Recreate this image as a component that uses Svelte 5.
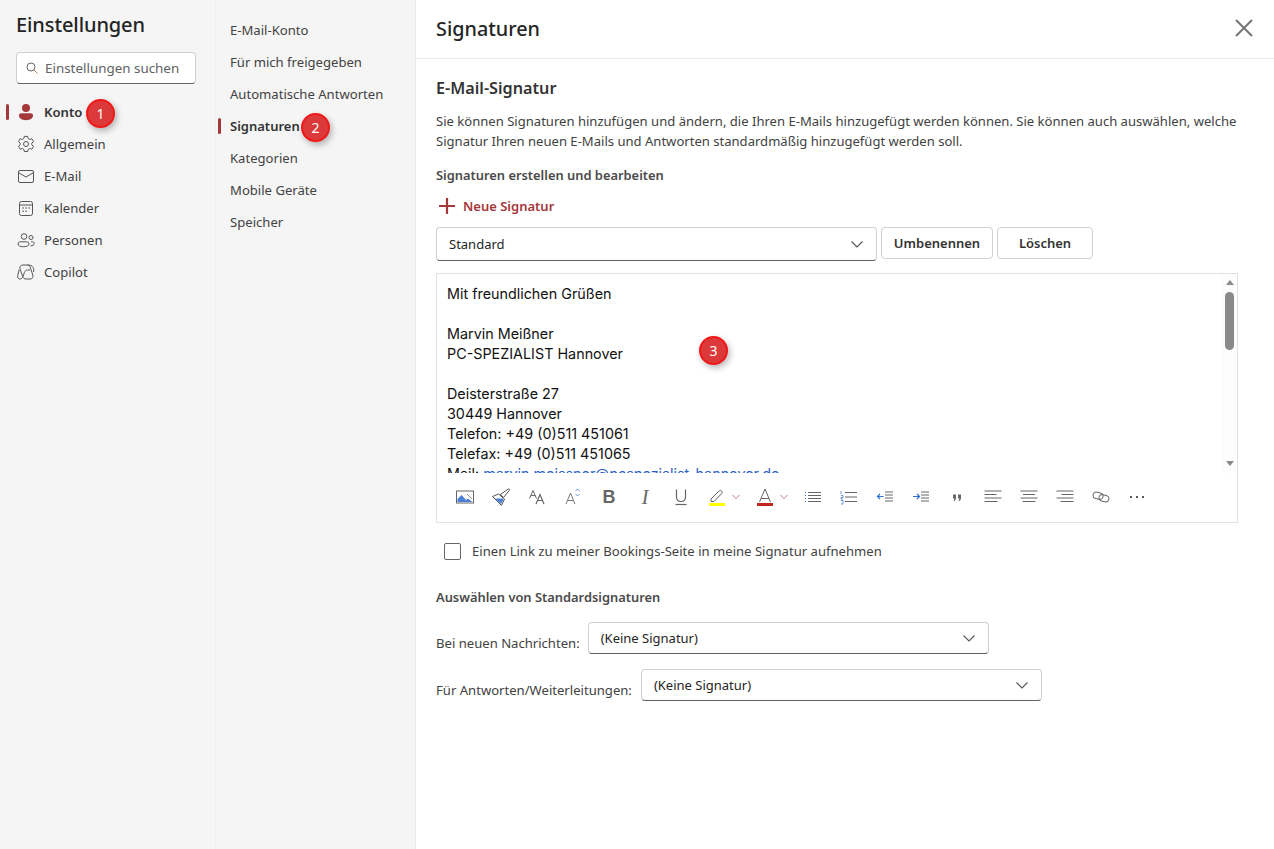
<script>
  const nav = ['Allgemein','E-Mail','Kalender','Personen','Copilot'];
  const sub = ['E-Mail-Konto','Für mich freigegeben','Automatische Antworten','Signaturen','Kategorien','Mobile Geräte','Speicher'];
  const lines = ['Mit freundlichen Grüßen','','Marvin Meißner','PC-SPEZIALIST Hannover','','Deisterstraße 27','30449 Hannover','Telefon: +49 (0)511 451061','Telefax: +49 (0)511 451065'];
</script>

{#snippet chevron()}
  <svg class="chev" width="14" height="14" viewBox="0 0 14 14"><path d="M1.5 4.5 7 10l5.5-5.5" fill="none" stroke="#555" stroke-width="1.1"/></svg>
{/snippet}
{#snippet navIcon(name)}
  <svg width="20" height="20" viewBox="0 0 20 20" fill="none" stroke="#555" stroke-width="1">
    {#if name === 'Allgemein'}
      <path d="M8.3 2.4h3.4l.5 2.2 1.4.8 2.2-.7 1.7 2.9-1.7 1.5v1.7l1.7 1.5-1.7 2.9-2.2-.7-1.4.8-.5 2.2H8.3l-.5-2.2-1.4-.8-2.2.7-1.7-2.9 1.7-1.5V9.1L2.5 7.6l1.7-2.9 2.2.7 1.4-.8z"/><circle cx="10" cy="10" r="2.5"/>
    {:else if name === 'E-Mail'}
      <rect x="2.500" y="4.500" width="15" height="12" rx="1.500"/><path d="m2.800 6.800 7.200 4.200 7.200-4.200"/>
    {:else if name === 'Kalender'}
      <rect x="3.500" y="3.500" width="13" height="14" rx="2"/><path d="M3.500 7h13"/><path d="M6.500 10h1.200M9.500 10h1.200M12.500 10h1.200M6.500 13.200h1.200M9.500 13.200h1.200" stroke-width="1.400"/>
    {:else if name === 'Personen'}
      <circle cx="8" cy="6.500" r="2.800"/><path d="M2 14c0-1.500 1-2.200 2.200-2.200h6.600c1.200 0 2.200.7 2.200 2.200 0 1.700-2 2.700-5.500 2.700S2 15.700 2 14z"/><circle cx="15" cy="7.500" r="2"/><path d="M15 11.800h1.500c1 0 1.800.6 1.800 1.700 0 1.400-1.500 2.300-3.800 2.300"/>
    {:else}
      <path d="M7 3h4c1.600 0 2.700.8 3.200 2.300l2.600 7.700c.7 2.200-.5 4-2.700 4H10c-1.600 0-2.700-.8-3.200-2.300L4 7c-.8-2.200.7-4 3-4z"/><path d="M14 8h-2.500c-1.500 0-2.500.8-3 2.200l-1.600 4.500c-.6 1.500-1.600 2.300-3 2.300-1.800 0-2.600-1.500-2.200-3.300l1.500-6"/><path d="M11.500 3c2 0 3.500.3 4.500 1.200 1.500 1.300 2.200 3.300 1.500 5.800"/>
    {/if}
  </svg>
{/snippet}

<div class="page">
  <aside class="left">
    <h1>Einstellungen</h1>
    <div class="search">
      <svg width="14" height="14" viewBox="0 0 14 14" fill="none" stroke="#666" stroke-width="1"><circle cx="6" cy="6" r="4"/><path d="m9 9 3.500 3.500" stroke="#c98a5a"/></svg>
      <span>Einstellungen suchen</span>
    </div>
    <nav class="mainnav">
      <div class="item active">
        <i class="bar"></i>
        <svg width="20" height="20" viewBox="0 0 20 20" fill="#a4373a"><circle cx="10" cy="6" r="4"/><path d="M3 13.500c0-1.300 1-2.200 2.200-2.200h9.600c1.200 0 2.200.9 2.200 2.200 0 2.700-2.700 4.700-7 4.700s-7-2-7-4.700z"/></svg>
        <span>Konto</span>
        <b class="badge one">1</b>
      </div>
      {#each nav as n}
        <div class="item">{@render navIcon(n)}<span>{n}</span></div>
      {/each}
    </nav>
  </aside>

  <nav class="mid">
    {#each sub as s}
      <div class="subitem" class:active={s === 'Signaturen'}>
        {#if s === 'Signaturen'}<i class="bar"></i><span>{s}</span><b class="badge two">2</b>{:else}<span>{s}</span>{/if}
      </div>
    {/each}
  </nav>

  <main>
    <header>
      <h2>Signaturen</h2>
      <svg width="20" height="20" viewBox="0 0 20 20" stroke="#757575" stroke-width="2" fill="none"><path d="m2 2 16 16M18 2 2 18"/></svg>
    </header>
    <section>
      <h3>E-Mail-Signatur</h3>
      <p class="intro">Sie können Signaturen hinzufügen und ändern, die Ihren E-Mails hinzugefügt werden können. Sie können auch auswählen, welche Signatur Ihren neuen E-Mails und Antworten standardmäßig hinzugefügt werden soll.</p>
      <h4>Signaturen erstellen und bearbeiten</h4>
      <div class="new">
        <svg width="18" height="18" viewBox="0 0 18 18" stroke="#a4373a" stroke-width="2.200"><path d="M9 1v16M1 9h16"/></svg>
        <span>Neue Signatur</span>
      </div>
      <div class="sigrow">
        <div class="select main-select"><span>Standard</span>{@render chevron()}</div>
        <button class="b1">Umbenennen</button>
        <button class="b2">Löschen</button>
      </div>
      <div class="editor">
        <div class="scrollwrap">
          <div class="text">
            {#each lines as l}<div class="line">{l || '\u00a0'}</div>{/each}
            <div class="line">Mail: <a href="#top">marvin.meissner@pcspezialist-hannover.de</a></div>
          </div>
          <div class="scrollbar">
            <i class="up"></i><i class="thumb"></i><i class="down"></i>
          </div>
          <b class="badge three">3</b>
        </div>
        <div class="toolbar">
          <span class="t"><svg width="18" height="18" viewBox="0 0 18 18"><rect x=".5" y="3" width="17" height="12" fill="#fff" stroke="#666"/><path d="M1.500 14V11l4-4 4.500 5 2-1.500 4.500 3.500z" fill="#4a7fd6"/><path d="m11 6 5 5" stroke="#888"/></svg></span>
          <span class="t"><svg width="20" height="20" viewBox="0 0 20 20"><path d="M1.500 9.500 10.500 18.500l3-6.500-6-5z" fill="#fff" stroke="#555"/><path d="M4 11.500h7.500l1 1-2.500 4.500z" fill="#4a7fd6"/><path d="m9.500 7.500 3 3 6-7.300c.6-.8-.4-1.800-1.200-1.200z" fill="#fff" stroke="#555"/></svg></span>
          <span class="t"><svg width="18" height="18" viewBox="0 0 18 18" fill="none" stroke="#666"><path d="M1.500 10.500 5 2.500l3.500 8M3 7.500h4"/><path d="M8 16 12 6.500 16 16M9.500 12.500h5" stroke-width="1.200"/></svg></span>
          <span class="t"><svg width="18" height="18" viewBox="0 0 18 18" fill="none"><path d="M2 16 6.500 5 11 16M3.500 12.500h6" stroke="#777"/><path d="m11.500 3 2-2 2 2M11.500 6l2 2 2-2" stroke="#6d96dd"/></svg></span>
          <span class="t glyph b">B</span>
          <span class="t glyph i">I</span>
          <span class="t"><svg width="18" height="18" viewBox="0 0 18 18" fill="none" stroke="#666" stroke-width="1.200"><path d="M4.500 1.500V9c0 3 2 4.500 4.500 4.500S13.500 12 13.500 9V1.500"/><path d="M3.500 16.500h11"/></svg></span>
          <span class="t wide"><span class="ti"><svg width="18" height="18" viewBox="0 0 18 18"><path d="m3 11 8-8c.8-.8 2-.8 2.700 0 .7.700.7 1.900 0 2.600L6 13.500H3z" fill="#fff" stroke="#666"/><rect x="1" y="15" width="16" height="3" fill="#ffff00"/></svg></span><svg class="mini" width="8" height="6" viewBox="0 0 8 6" fill="none" stroke="#c8736f"><path d="m.5 1 3.500 3.500L7.500 1"/></svg></span>
          <span class="t wide"><span class="ti"><svg width="18" height="18" viewBox="0 0 18 18"><path d="M3.500 14 9 1l5.500 13M5 10.500h8" fill="none" stroke="#666"/><rect x="1" y="15" width="16" height="3" fill="#c0281c"/></svg></span><svg class="mini" width="8" height="6" viewBox="0 0 8 6" fill="none" stroke="#c8736f"><path d="m.5 1 3.500 3.500L7.500 1"/></svg></span>
          <span class="t"><svg width="18" height="18" viewBox="0 0 18 18" fill="none"><path d="M4 4.500h13M4 7.500h13M4 10.500h13M4 13.500h13" stroke="#666"/><path d="M1 4.500h1M1 7.500h1M1 10.500h1M1 13.500h1" stroke="#4a7fd6"/></svg></span>
          <span class="t"><svg width="18" height="18" viewBox="0 0 18 18" fill="none"><path d="M5 4.500h12M5 9h12M5 13.500h12" stroke="#666"/><path d="M1 3v3M1 7.500h2v2H1v1.500h2M1 12.500h2V16H1" stroke="#4a7fd6" stroke-width=".8"/></svg></span>
          <span class="t"><svg width="18" height="18" viewBox="0 0 18 18" fill="none"><path d="M9 4h8M9 7h8M9 10h8M9 13h8" stroke="#666"/><path d="M7.500 8.500H1.500m2.500-2.500-2.500 2.500L4 11" stroke="#2f6fd3" stroke-width="1.200"/></svg></span>
          <span class="t"><svg width="18" height="18" viewBox="0 0 18 18" fill="none"><path d="M9 4h8M9 7h8M9 10h8M9 13h8" stroke="#666"/><path d="M1 8.500h6M5 6l2.500 2.500L5 11" stroke="#2f6fd3" stroke-width="1.200"/></svg></span>
          <span class="t"><svg width="18" height="18" viewBox="0 0 18 18" fill="#666"><path d="M5 6.500h3v3.500c0 1.300-.6 2.200-1.800 3l-.7-.6c.6-.5.9-1.100.9-1.900H5zM10 6.500h3v3.500c0 1.300-.6 2.200-1.800 3l-.7-.6c.6-.5.9-1.100.9-1.900H10z"/></svg></span>
          <span class="t"><svg width="18" height="18" viewBox="0 0 18 18" stroke="#666" fill="none"><path d="M.5 3h17M.5 6.500h12M.5 10h17M.5 13.500h13"/></svg></span>
          <span class="t"><svg width="18" height="18" viewBox="0 0 18 18" stroke="#666" fill="none"><path d="M.5 3h17M3 6.500h12M.5 10h17M2.500 13.500h13"/></svg></span>
          <span class="t"><svg width="18" height="18" viewBox="0 0 18 18" stroke="#666" fill="none"><path d="M.5 3h17M5.500 6.500h12M.5 10h17M4.500 13.500h13"/></svg></span>
          <span class="t"><svg width="18" height="18" viewBox="0 0 18 18" fill="none" stroke="#666"><rect x="1" y="4.500" width="10" height="6.500" rx="3.250" transform="rotate(15 6 8)"/><rect x="7" y="7" width="10" height="6.500" rx="3.250" transform="rotate(15 12 10)"/></svg></span>
          <span class="t"><svg width="18" height="18" viewBox="0 0 18 18" fill="#222"><circle cx="3" cy="9" r="1"/><circle cx="9" cy="9" r="1"/><circle cx="15" cy="9" r="1"/></svg></span>
        </div>
      </div>
      <div class="check"><i></i><span>Einen Link zu meiner Bookings-Seite in meine Signatur aufnehmen</span></div>
      <h4 class="defaults">Auswählen von Standardsignaturen</h4>
      <div class="pick first">
        <label for="a">Bei neuen Nachrichten:</label>
        <div id="a" class="select s401"><span>(Keine Signatur)</span>{@render chevron()}</div>
      </div>
      <div class="pick">
        <label for="b">Für Antworten/Weiterleitungen:</label>
        <div id="b" class="select s401"><span>(Keine Signatur)</span>{@render chevron()}</div>
      </div>
    </section>
  </main>
</div>

<style>
  :global(body) { margin: 0; font-family: "Noto Sans", "Open Sans", sans-serif; color: #424242; background: #fff; }
  .page { display: flex; height: 849px; width: 1274px; overflow: hidden; font-size: 13.1px; }
  .left { width: 215px; flex: none; background: #f5f5f5; padding: 0 0 0 16px; box-sizing: border-box; }
  h1 { margin: 0; font-size: 20px; font-weight: 500; color: #242424; padding-top: 11px; line-height: 28px; letter-spacing: -.1px; }
  .search { margin-top: 13px; width: 180px; height: 32px; box-sizing: border-box; background: #fff; border: 1px solid #d1d1d1; border-bottom-color: #666; border-radius: 4px; display: flex; align-items: center; gap: 6px; padding-left: 8px; font-size: 13.4px; color: #616161; }
  .mainnav { margin-top: 12px; margin-left: -16px; }
  .item { position: relative; display: flex; align-items: center; gap: 8px; height: 32px; padding-left: 16px; color: #424242; }
  .item.active { font-weight: 600; color: #333; }
  .bar { position: absolute; left: 6px; top: 8px; width: 3px; height: 16px; background: #a4373a; border-radius: 2px; }
  .item svg { flex: none; }
  .mid { width: 200px; flex: none; background: #f5f5f5; box-sizing: border-box; padding: 14px 0 0 14px; border-left: 1px solid #f0f0f0; }
  .subitem { position: relative; height: 32px; display: flex; align-items: center; }
  .subitem.active { font-weight: 600; color: #333; font-size: 13px; }
  .subitem .bar { left: -12px; }
  main { flex: 1; min-width: 0; border-left: 1px solid #ebebeb; }
  header { height: 59px; box-sizing: border-box; border-bottom: 1px solid #ebebeb; display: flex; align-items: center; justify-content: space-between; padding: 0 20px 2px 20px; }
  h2 { margin: 0; font-size: 19.8px; font-weight: 500; color: #242424; }
  section { padding: 0 36px 0 20px; }
  h3 { margin: 0; padding-top: 18px; font-size: 16.2px; line-height: 22px; font-weight: 600; color: #333; }
  .intro { margin: 12px 0 0; line-height: 20px; font-size: 13.07px; }
  h4 { margin: 14px 0 0; line-height: 20px; font-size: 12.88px; font-weight: 600; color: #4a4a4a; }
  .new { display: flex; align-items: center; gap: 7px; margin: 11px 0 0 2px; height: 20px; color: #a4373a; font-weight: 600; font-size: 13px; }
  .sigrow { display: flex; gap: 4px; margin-top: 11px; height: 34px; }
  .select { box-sizing: border-box; display: flex; align-items: center; justify-content: space-between; background: #fff; border: 1px solid #d1d1d1; border-bottom-color: #616161; border-radius: 4px; padding: 0 12px; color: #242424; font-size: 13px; }
  .main-select { width: 441px; }
  button { font: inherit; font-size: 13px; font-weight: 600; color: #333; background: #fff; border: 1px solid #d1d1d1; border-radius: 4px; height: 32px; padding: 0; }
  .b1 { width: 112px; } .b2 { width: 96px; }
  .editor { margin-top: 12px; height: 250px; box-sizing: border-box; border: 1px solid #e1e1e1; display: flex; flex-direction: column; }
  .scrollwrap { position: relative; height: 199px; display: flex; overflow: hidden; flex: none; }
  .text { flex: 1; padding: 10px 0 0 10px; color: #111; font-family: Inter, sans-serif; font-size: 14.35px; }
  .line { line-height: 20px; white-space: nowrap; }
  a { color: #2b5fc7; text-decoration: underline; }
  .scrollbar { width: 15px; background: #fdfdfd; display: flex; flex-direction: column; align-items: center; height: 199px; position: relative; }
  .up { margin-top: 6px; border: 4.5px solid transparent; border-top: 0; border-bottom: 5px solid #8a8a8a; }
  .thumb { margin-top: 7px; width: 9px; height: 58px; border-radius: 5px; background: #8a8a8a; }
  .down { position: absolute; bottom: 7px; border: 4.5px solid transparent; border-bottom: 0; border-top: 5px solid #8a8a8a; }
  .toolbar { display: flex; padding-left: 10px; height: 44px; align-items: center; margin-top: 2px; }
  .t { width: 36px; flex: none; display: flex; justify-content: center; align-items: center; height: 20px; }
  .t.wide { width: 48px; justify-content: flex-start; }
  .ti { width: 36px; display: flex; justify-content: center; }
  .mini { margin-left: -3px; }
  .glyph { font-family: "Liberation Sans", sans-serif; font-size: 18px; color: #666; }
  .b { font-weight: 700; }
  .i { font-family: "Liberation Serif", serif; font-style: italic; font-size: 20px; }
  .check { display: flex; align-items: center; margin: 18px 0 0 8px; height: 20px; gap: 11px; }
  .check i { width: 15px; height: 15px; border: 1px solid #666; border-radius: 2px; background: #fff; flex: none; }
  .defaults { margin-top: 26px; }
  .pick { display: flex; align-items: center; gap: 9px; margin-top: 15px; height: 32px; }
  .pick.first { gap: 8px; }
  .pick label { padding-top: 9px; }
  .s401 { width: 401px; height: 32px; }
  .badge { position: absolute; width: 29px; height: 29px; border-radius: 50%; background: #dc3a3a; box-sizing: border-box; border: 2px solid #f01818; color: #fff; display: flex; align-items: center; justify-content: center; font-weight: 400; font-size: 14px; box-shadow: 2px 3px 6px rgba(0,0,0,.28); }
  .one { left: 86px; top: 3px; }
  .two { left: 71px; top: 3px; }
  .three { left: 262px; top: 62px; }
</style>
